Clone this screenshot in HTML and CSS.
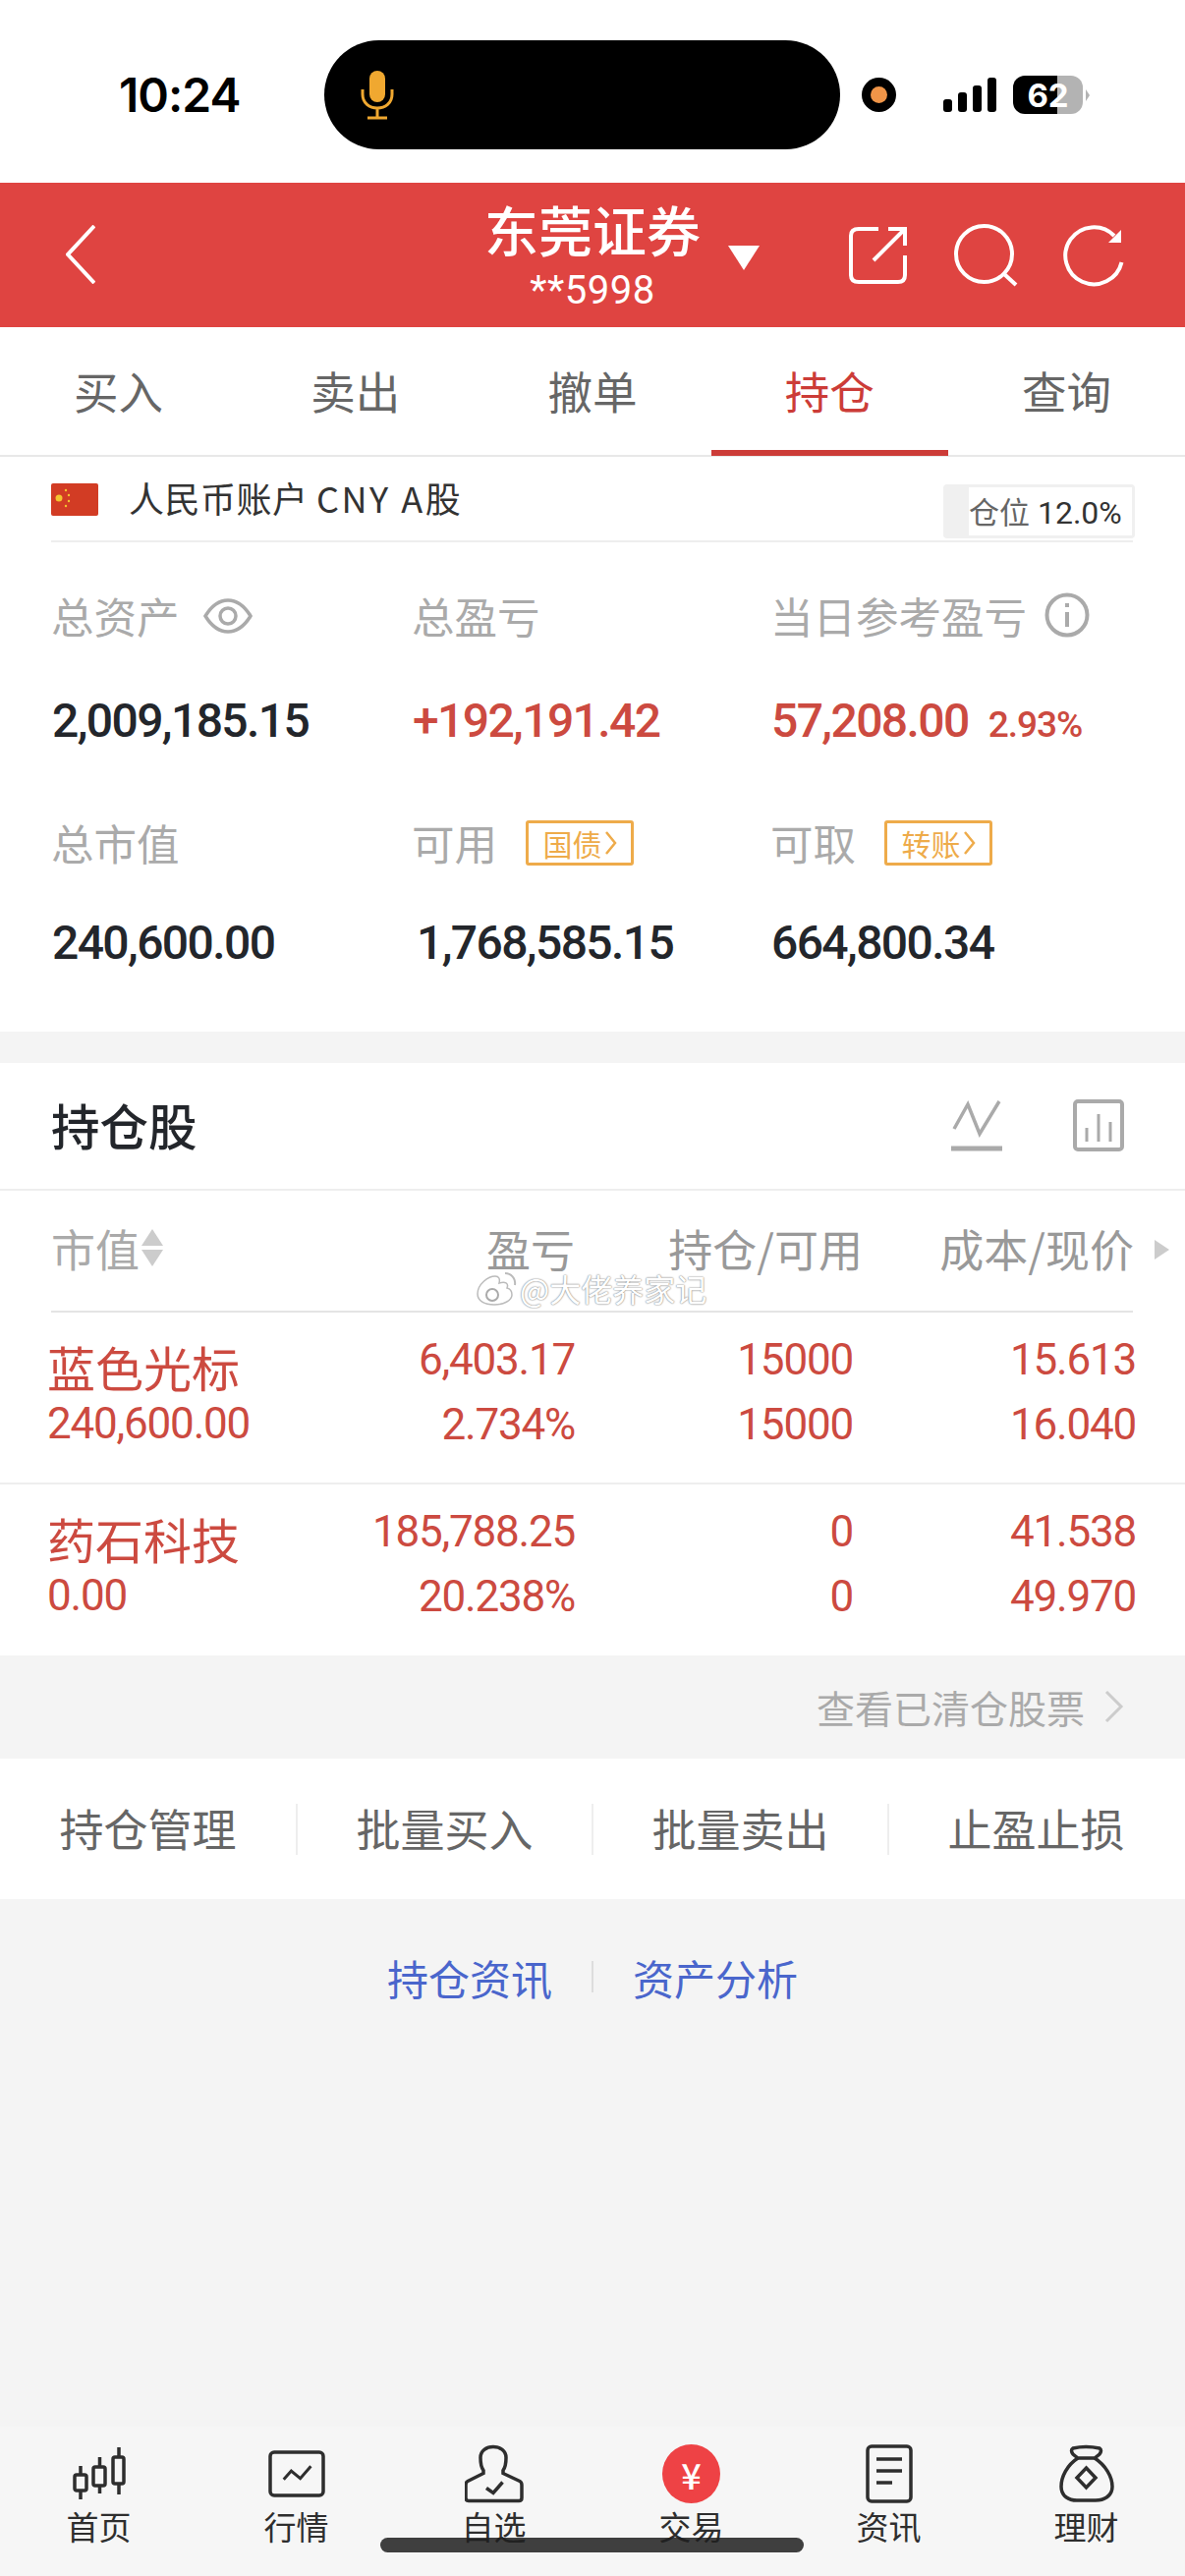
FILE: index.html
```html
<!DOCTYPE html>
<html lang="zh-CN">
<head>
<meta charset="UTF-8">
<meta name="viewport" content="width=device-width, initial-scale=1.0">
<title>持仓</title>
<link rel="stylesheet" href="styles.css">
</head>
<body>
<div class="page">

  <div class="status">
    <span class="time">10:24</span>
    <div class="island">
      <svg class="mic" width="34" height="50" viewBox="0 0 34 50">
        <rect x="9" y="0" width="16" height="32" rx="8" fill="#f0a830"/>
        <path d="M2 19V24C2 33 9 38 17 38S32 33 32 24V19M17 38V47M7 48H27" fill="none" stroke="#f0a830" stroke-width="3"/>
      </svg>
    </div>
    <span class="rec"><i></i></span>
    <div class="signal"><i class="b1"></i><i class="b2"></i><i class="b3"></i><i class="b4"></i></div>
    <div class="battery"><span class="battery-num">62</span></div>
    <span class="battery-nub"></span>
  </div>

  <div class="topbar">
    <svg class="back" width="30" height="60" viewBox="0 0 30 60">
      <path d="M29 1L2 30L29 59" fill="none" stroke="#fff" stroke-width="4"/>
    </svg>
    <div class="broker">
      <div class="broker-name">东莞证券</div>
      <div class="broker-acct">**5998</div>
    </div>
    <div class="topbar-right">
      <span class="caret"></span>
      <div class="topbar-icons">
        <svg width="60" height="60" viewBox="0 0 60 60" fill="none" stroke="#fff" stroke-width="4">
          <path d="M30 3H10Q2 3 2 10V50Q2 57 10 57H50Q57 57 57 50V30"/>
          <path d="M25 35L57 3M40 3H57V20"/>
        </svg>
        <svg width="66" height="64" viewBox="0 0 66 64" fill="none" stroke="#fff" stroke-width="4">
          <circle cx="31.5" cy="30.5" r="28.5"/>
          <path d="M52 51L64 62"/>
        </svg>
        <svg width="62" height="64" viewBox="0 0 62 64" fill="none" stroke="#fff" stroke-width="4">
          <path d="M59.5 39A29 29 0 1 1 52 12"/>
          <path d="M59 6V19H46Z" fill="#fff" stroke="none"/>
        </svg>
      </div>
    </div>
  </div>

  <div class="tabs">
    <div class="tab">买入</div>
    <div class="tab">卖出</div>
    <div class="tab">撤单</div>
    <div class="tab tab-active">持仓</div>
    <div class="tab">查询</div>
  </div>

  <div class="summary">
    <div class="account">
      <div class="account-left">
        <svg class="flag" width="48" height="33" viewBox="0 0 48 33">
          <rect width="48" height="33" rx="2" fill="#d23c24"/>
          <circle cx="8" cy="15" r="3.5" fill="#f4c430"/>
          <circle cx="15" cy="7" r="1.2" fill="#f4c430"/>
          <circle cx="18" cy="12" r="1.2" fill="#f4c430"/>
          <circle cx="18" cy="18" r="1.2" fill="#f4c430"/>
          <circle cx="15" cy="23" r="1.2" fill="#f4c430"/>
        </svg>
        <span class="account-name">人民币账户 <span class="account-cur">CNY A</span>股</span>
      </div>
      <div class="ratio"><div class="ratio-inner"><span class="ratio-label">仓位</span> 12.0%</div></div>
    </div>

    <div class="stats">
      <div class="stat">
        <div class="stat-label">总资产
          <svg class="eye" width="50" height="36" viewBox="0 0 50 36" fill="none" stroke="#aaa" stroke-width="3.5">
            <path d="M2 18C10 5 18 2 25 2S40 5 48 18C40 31 32 34 25 34S10 31 2 18Z"/>
            <circle cx="25" cy="18" r="8"/>
          </svg>
        </div>
        <div class="stat-value">2,009,185.15</div>
      </div>
      <div class="stat">
        <div class="stat-label">总盈亏</div>
        <div class="stat-value red">+192,191.42</div>
      </div>
      <div class="stat">
        <div class="stat-label">当日参考盈亏
          <svg class="info" width="46" height="46" viewBox="0 0 46 46" fill="none" stroke="#aaa" stroke-width="4">
            <circle cx="23" cy="23" r="20.5"/>
            <path d="M23 20V35M23 11V15"/>
          </svg>
        </div>
        <div class="stat-value red">57,208.00<span class="stat-pct">2.93%</span></div>
      </div>
      <div class="stat">
        <div class="stat-label">总市值</div>
        <div class="stat-value">240,600.00</div>
      </div>
      <div class="stat">
        <div class="stat-label">可用<span class="tag">国债<svg width="13" height="26" viewBox="0 0 13 26"><path d="M2 2L11 13L2 24" fill="none" stroke="#eeab4a" stroke-width="2.5"/></svg></span></div>
        <div class="stat-value indent">1,768,585.15</div>
      </div>
      <div class="stat">
        <div class="stat-label">可取<span class="tag">转账<svg width="13" height="26" viewBox="0 0 13 26"><path d="M2 2L11 13L2 24" fill="none" stroke="#eeab4a" stroke-width="2.5"/></svg></span></div>
        <div class="stat-value">664,800.34</div>
      </div>
    </div>
  </div>

  <div class="holdings">
    <div class="holdings-head">
      <h2>持仓股</h2>
      <div class="holdings-icons">
        <svg width="52" height="53" viewBox="0 0 52 53" fill="none" stroke="#aaa">
          <path d="M3 30L17 5L29 35L49 2" stroke-width="3.5"/>
          <path d="M0 50H52" stroke-width="5"/>
        </svg>
        <svg width="52" height="53" viewBox="0 0 52 53" fill="none" stroke="#aaa" stroke-width="4">
          <rect x="2" y="2" width="48" height="49" rx="3"/>
          <path d="M14 29V43M26 15V43M38 23V43" stroke-width="3"/>
        </svg>
      </div>
    </div>

    <div class="table-wrap">
      <div class="thead">
        <div class="th th-first">市值
          <svg class="sort" width="22" height="38" viewBox="0 0 22 38" fill="#ccc">
            <path d="M11 0L22 17H0Z"/>
            <path d="M0 21H22L11 38Z"/>
          </svg>
        </div>
        <div class="th">盈亏</div>
        <div class="th">持仓/可用</div>
        <div class="th">成本/现价</div>
        <span class="th-more"></span>
      </div>

      <div class="trow trow-first">
        <div class="td-name">
          <div class="stock-name">蓝色光标</div>
          <div class="stock-cap">240,600.00</div>
        </div>
        <div class="td"><div>6,403.17</div><div>2.734%</div></div>
        <div class="td"><div>15000</div><div>15000</div></div>
        <div class="td"><div>15.613</div><div>16.040</div></div>
      </div>
      <div class="trow">
        <div class="td-name">
          <div class="stock-name">药石科技</div>
          <div class="stock-cap">0.00</div>
        </div>
        <div class="td"><div>185,788.25</div><div>20.238%</div></div>
        <div class="td"><div>0</div><div>0</div></div>
        <div class="td"><div>41.538</div><div>49.970</div></div>
      </div>

      <div class="watermark">
        <svg width="44" height="36" viewBox="0 0 44 36">
          <path d="M3 24C3 14 14 6 21 6C25 6 26 9 25 13C31 11 35 13 33 18C37 19 38 22 38 25C38 31 29 35 20 35C10 35 3 31 3 24Z" fill="#fff" stroke="#bbb" stroke-width="1.5"/>
          <circle cx="18" cy="25" r="6" fill="none" stroke="#aaa" stroke-width="2"/>
          <path d="M31 3C37 3 42 8 41 15" fill="none" stroke="#bbb" stroke-width="2"/>
        </svg>
        <span>@大佬养家记</span>
      </div>
    </div>
  </div>

  <div class="cleared">
    <span>查看已清仓股票</span>
    <svg width="20" height="34" viewBox="0 0 20 34"><path d="M2 2L17 17L2 32" fill="none" stroke="#ccc" stroke-width="3"/></svg>
  </div>

  <div class="actions">
    <div class="action">持仓管理</div>
    <div class="action">批量买入</div>
    <div class="action">批量卖出</div>
    <div class="action">止盈止损</div>
  </div>

  <div class="links">
    <span>持仓资讯</span>
    <i class="links-sep"></i>
    <span>资产分析</span>
  </div>

  <div class="nav">
    <div class="nav-item">
      <svg width="54" height="54" viewBox="0 0 54 54" fill="none" stroke="#2e2e2e" stroke-width="3.5">
        <rect x="2" y="28" width="12" height="16" rx="2"/><path d="M8 19V28M8 44V53"/>
        <rect x="21" y="20" width="12" height="19" rx="2"/><path d="M27.5 10V20M27.5 39V47"/>
        <rect x="41" y="10" width="11" height="27" rx="2"/><path d="M47 0V10M47 37V48"/>
      </svg>
      <span>首页</span>
    </div>
    <div class="nav-item">
      <svg width="58" height="48" viewBox="0 0 58 48" fill="none" stroke="#2e2e2e" stroke-width="3.5">
        <rect x="2" y="2" width="54" height="44" rx="4"/>
        <path d="M15.7 29.7L23.4 21L32.6 28.7L43.4 16.3" stroke-width="3"/>
      </svg>
      <span>行情</span>
    </div>
    <div class="nav-item">
      <svg width="60" height="59" viewBox="0 0 60 59" fill="none" stroke="#2e2e2e" stroke-width="3.5">
        <path d="M19 26C16 22 16 17 16 13C16 6 22 2 29 2C36 2 42 6 42 13C42 17 42 22 39 26V29L56 37Q58 38 58 41V54Q58 57 55 57H4Q1 57 1 54V41Q1 38 3 37L19 29Z"/>
        <path d="M22 44L29 49L38.5 38"/>
      </svg>
      <span>自选</span>
    </div>
    <div class="nav-item">
      <div class="trade-dot">¥</div>
      <span>交易</span>
    </div>
    <div class="nav-item">
      <svg width="48" height="60" viewBox="0 0 48 60" fill="none" stroke="#2e2e2e" stroke-width="3.5">
        <rect x="2" y="2" width="44" height="56" rx="4"/>
        <path d="M11 15H37M11 27H37M11 39H27"/>
      </svg>
      <span>资讯</span>
    </div>
    <div class="nav-item">
      <svg width="56" height="58" viewBox="0 0 56 58" fill="none" stroke="#2e2e2e" stroke-width="3.5">
        <path d="M14 3Q27 0 41 3Q44 5 41 9L36 13H19L14 9Q11 5 14 3Z"/>
        <path d="M19 13C8 20 2 32 2 42C2 52 10 56 18 56H37C45 56 54 52 54 42C54 32 47 20 36 13"/>
        <path d="M27.5 23L37 33L27.5 43L18 33Z"/>
      </svg>
      <span>理财</span>
    </div>
    <div class="home-bar"></div>
  </div>

</div>
</body>
</html>
```

FILE: styles.css
```css
body {
    margin: 0;
    padding: 0;
    background: #f4f4f4;
    font-family: "Noto Sans CJK SC", "Liberation Sans", sans-serif;
}

.page {
    width: 1206px;
    height: 2622px;
    display: flex;
    flex-direction: column;
    overflow: hidden;
}

.red {
    color: #cc4a40;
}

/* status bar */
.status {
    height: 186px;
    flex: none;
    background: #fff;
    display: flex;
    align-items: center;
    padding-left: 121px;
    padding-top: 7px;
    box-sizing: border-box;
    position: relative;
}

.time {
    width: 209px;
    font-family: Inter, "Liberation Sans", sans-serif;
    font-size: 48px;
    font-weight: 600;
    color: #000;
    letter-spacing: -1px;
}

.island {
    width: 525px;
    height: 111px;
    border-radius: 56px;
    background: #000;
    display: flex;
    align-items: center;
    padding-left: 37px;
    box-sizing: border-box;
}

.rec {
    width: 35px;
    height: 35px;
    margin-left: 22px;
    border-radius: 50%;
    background: #000;
    display: flex;
    align-items: center;
    justify-content: center;
}

.rec i {
    width: 17px;
    height: 17px;
    border-radius: 50%;
    background: #f09548;
}

.signal {
    display: flex;
    align-items: flex-end;
    gap: 6px;
    height: 35px;
    margin-left: 48px;
}

.signal i {
    width: 9px;
    border-radius: 3px;
    background: #000;
}

.b1 { height: 13px; }
.b2 { height: 20px; }
.b3 { height: 27px; }
.b4 { height: 35px; }

.battery {
    width: 71px;
    height: 39px;
    margin-left: 17px;
    border-radius: 12px;
    background: linear-gradient(90deg, #000 0, #000 45px, #b3b3b3 45px);
    display: flex;
    align-items: center;
    justify-content: center;
}

.battery-num {
    font-family: Inter, "Liberation Sans", sans-serif;
    font-size: 33px;
    font-weight: 700;
    color: #fff;
}

.battery-nub {
    width: 0;
    height: 0;
    margin-left: 3px;
    border-left: 4px solid #b3b3b3;
    border-top: 6px solid transparent;
    border-bottom: 6px solid transparent;
}

/* red header */
.topbar {
    height: 147px;
    flex: none;
    background: #df4441;
    display: grid;
    grid-template-columns: 1fr 215px 1fr;
    align-items: center;
    box-sizing: border-box;
    position: relative;
}

.back {
    margin-left: 67px;
    margin-top: -1px;
}

.broker {
    text-align: center;
    color: #fff;
    padding-top: 5px;
}

.broker-name {
    font-size: 55px;
    font-weight: 500;
    line-height: 60px;
    white-space: nowrap;
    margin: 0 -5px 7px;
}

.broker-acct {
    font-family: Roboto, sans-serif;
    font-size: 40px;
    line-height: 54px;
    letter-spacing: 0.5px;
}

.topbar-right {
    display: flex;
    align-items: center;
    padding-left: 30px;
    padding-right: 62px;
}

.caret {
    width: 0;
    height: 0;
    border-left: 16px solid transparent;
    border-right: 16px solid transparent;
    border-top: 25px solid #fff;
    margin-top: 6px;
}

.topbar-icons {
    margin-left: auto;
    display: flex;
    align-items: center;
    gap: 46px;
}

/* tabs */
.tabs {
    height: 132px;
    flex: none;
    background: #fff;
    display: grid;
    grid-template-columns: repeat(5, 1fr);
    border-bottom: 2px solid #e8e8e8;
    box-sizing: border-box;
}

.tab {
    font-size: 45.5px;
    color: #666;
    text-align: center;
    line-height: 128px;
    height: 131px;
    box-sizing: border-box;
}

.tab-active {
    color: #cc3c38;
    border-bottom: 6px solid #cc3c38;
}

/* account + stats */
.summary {
    height: 585px;
    flex: none;
    background: #fff;
}

.account {
    margin: 0 53px 0 52px;
    height: 87px;
    border-bottom: 2px solid #eee;
    box-sizing: border-box;
    display: flex;
    justify-content: space-between;
    position: relative;
}

.account-left {
    display: flex;
    align-items: center;
    gap: 31px;
    height: 82px;
}

.account-name {
    font-size: 36px;
    color: #333;
    letter-spacing: 0.5px;
}

.account-cur {
    letter-spacing: 2.5px;
}

.flag {
    margin-top: 4px;
}

.ratio {
    position: absolute;
    right: -2px;
    top: 28px;
    width: 195px;
    height: 55px;
    background: #f0f0f0;
    border-radius: 4px;
}

.ratio-inner {
    position: absolute;
    left: 26px;
    top: 3px;
    right: 3px;
    bottom: 3px;
    background: #fff;
    font-family: Roboto, sans-serif;
    font-size: 32px;
    line-height: 47px;
    color: #333;
    white-space: nowrap;
}

.ratio-label {
    font-family: "Noto Sans CJK SC", sans-serif;
    font-size: 31px;
    color: #666;
}

.stats {
    display: grid;
    grid-template-columns: 367px 365px 1fr;
    grid-template-rows: 231px 226px;
    padding-left: 52px;
    padding-top: 45px;
}

.stat-label {
    font-size: 43.5px;
    line-height: 60px;
    color: #aaa;
    display: flex;
    align-items: center;
    white-space: nowrap;
}

.eye {
    margin-left: 24px;
}

.info {
    margin-left: 18px;
    margin-top: -2px;
}

.tag {
    margin-left: 29px;
    width: 110px;
    height: 46px;
    border: 3px solid #eeab4a;
    border-radius: 3px;
    box-sizing: border-box;
    font-size: 30px;
    line-height: 40px;
    color: #eeab4a;
    display: flex;
    align-items: center;
    justify-content: center;
    gap: 2px;
}

.stat-value {
    font-family: Roboto, sans-serif;
    font-size: 48px;
    font-weight: 500;
    letter-spacing: -1.6px;
    line-height: 60px;
    color: #23262b;
    margin-top: 47px;
    margin-left: 1px;
    white-space: nowrap;
}

.stat-value.red {
    color: #cc4a40;
}

.stats .stat:nth-child(n+4) .stat-value {
    margin-top: 42px;
}

.stat-value.indent {
    margin-left: 5px;
}

.stat-pct {
    font-size: 37px;
    letter-spacing: -1px;
    margin-left: 20px;
}

/* holdings table */
.holdings {
    margin-top: 32px;
    flex: none;
    background: #fff;
}

.holdings-head {
    height: 130px;
    border-bottom: 2px solid #eee;
    box-sizing: border-box;
    display: flex;
    align-items: center;
    justify-content: space-between;
    padding: 0 62px 4px 52px;
}

.holdings-head h2 {
    margin: 0;
    font-size: 49.5px;
    font-weight: 500;
    color: #23262b;
}

.holdings-icons {
    display: flex;
    gap: 72px;
    margin-top: 2px;
}

.table-wrap {
    position: relative;
}

.thead {
    margin: 0 53px 0 52px;
    height: 124px;
    padding-bottom: 6px;
    border-bottom: 2px solid #e4e4e4;
    box-sizing: border-box;
    display: grid;
    grid-template-columns: 268px 265px 293px 276px;
    align-items: center;
    position: relative;
}

.th {
    font-size: 45px;
    color: #999;
    text-align: right;
    white-space: nowrap;
}

.th-first {
    text-align: left;
    display: flex;
    align-items: center;
    gap: 2px;
    color: #aaa;
}

.th-more {
    position: absolute;
    right: -37px;
    top: 50px;
    width: 0;
    height: 0;
    border-left: 15px solid #ccc;
    border-top: 10px solid transparent;
    border-bottom: 10px solid transparent;
}

.trow {
    height: 174px;
    padding: 0 50px 0 49px;
    box-sizing: border-box;
    display: grid;
    grid-template-columns: 271px 265px 283px 288px;
    color: #cc4a40;
}

.trow-first {
    height: 175px;
    border-bottom: 2px solid #eee;
}

.td-name {
    padding-top: 27px;
    white-space: nowrap;
}

.stock-name {
    font-size: 49px;
    line-height: 56px;
    margin-left: -1px;
}

.stock-cap {
    font-family: Roboto, sans-serif;
    font-size: 44px;
    letter-spacing: -1.2px;
    line-height: 60px;
    margin-left: -1px;
}

.td {
    padding-top: 15px;
    text-align: right;
    font-family: Roboto, sans-serif;
    font-size: 44px;
    letter-spacing: -1.2px;
    line-height: 66px;
}

.watermark {
    position: absolute;
    left: 483px;
    top: 76px;
    display: flex;
    align-items: center;
    gap: 2px;
    font-size: 32px;
    color: #fff;
    text-shadow: 0 0 2px #888, 0 0 1px #888;
    white-space: nowrap;
}

/* below the table */
.cleared {
    height: 105px;
    flex: none;
    display: flex;
    align-items: center;
    justify-content: flex-end;
    gap: 20px;
    padding-right: 62px;
    padding-bottom: 2px;
    box-sizing: border-box;
    font-size: 39px;
    color: #aaa;
}

.actions {
    height: 143px;
    flex: none;
    background: #fff;
    display: grid;
    grid-template-columns: repeat(4, 1fr);
    align-items: center;
    padding-right: 2px;
}

.action {
    font-size: 45px;
    color: #666;
    text-align: center;
    height: 52px;
    line-height: 50px;
    border-left: 2px solid #eee;
    white-space: nowrap;
}

.action:first-child {
    border-left: 0;
}

.links {
    flex: none;
    padding-top: 47px;
    height: 64px;
    display: flex;
    justify-content: center;
    align-items: center;
    gap: 40px;
    font-size: 42px;
    color: #4a66cc;
}

.links-sep {
    width: 2px;
    height: 32px;
    background: #ddd;
}

/* bottom nav */
.nav {
    margin-top: auto;
    height: 152px;
    flex: none;
    background: #f6f6f6;
    display: grid;
    grid-template-columns: repeat(6, 1fr);
    position: relative;
}

.nav-item {
    display: flex;
    flex-direction: column;
    align-items: center;
    font-size: 33px;
    color: #2e2e2e;
    padding-top: 18px;
    box-sizing: border-box;
}

.nav-item svg,
.trade-dot {
    height: 60px;
    flex: none;
}

.nav-item span {
    line-height: 46px;
}

.trade-dot {
    width: 59px;
    border-radius: 50%;
    background: #ee4245;
    color: #fff;
    font-family: "Noto Sans CJK SC", sans-serif;
    font-size: 36px;
    font-weight: 500;
    line-height: 60px;
    text-align: center;
}

.home-bar {
    position: absolute;
    left: 387px;
    top: 113px;
    width: 431px;
    height: 15px;
    border-radius: 8px;
    background: rgba(30, 30, 30, 0.85);
}
```
